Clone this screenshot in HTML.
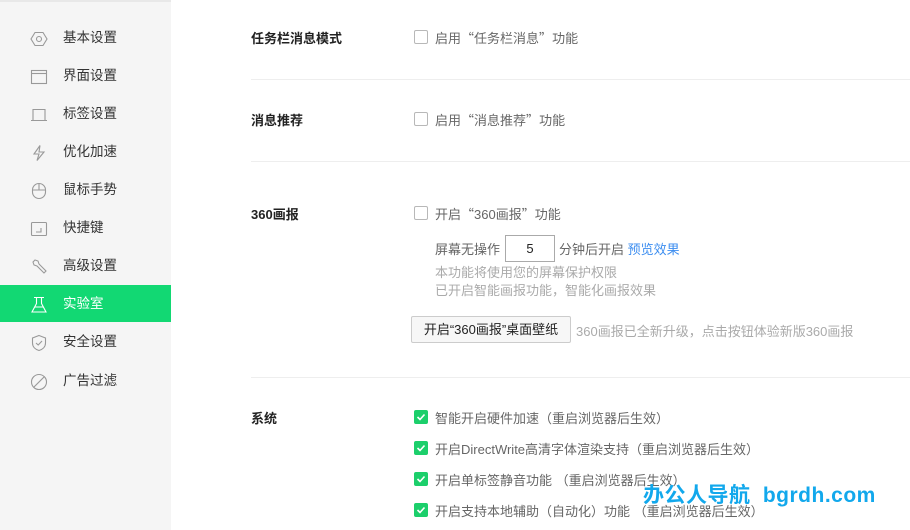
<!DOCTYPE html>
<html><head><meta charset="utf-8"><style>
*{margin:0;padding:0;box-sizing:border-box}
body{width:910px;height:530px;overflow:hidden;background:#fff;font-family:"Liberation Sans","Noto Sans CJK SC",sans-serif;font-size:13px;color:#333;position:relative}
.side{position:absolute;left:0;top:0;width:171px;height:530px;background:#f5f5f5;border-top:2px solid #e8e8e8}
.it{position:absolute;left:0;width:171px;height:38px;line-height:38px;padding-left:63px;font-size:13.5px;color:#333}
.it svg{position:absolute;left:30px;top:11px}
.act{background:#12d873;color:#fff}
.a{position:absolute;white-space:nowrap}
.lbl{font-weight:bold;color:#222;font-size:13px}
.hr{position:absolute;left:251px;right:0;height:1px;background:#eeeeee}
.cb{position:absolute;width:14px;height:14px;border:1px solid #b8b8b8;border-radius:2px;background:#fff}
.gray{color:#666}
.lg{color:#aaa}
.q{font-family:"Noto Sans CJK SC",sans-serif}
</style></head><body>
<div class="side">
<div class="it" style="top:17px"><svg width="18" height="18" viewBox="0 0 18 18" fill="none" stroke="#999" stroke-width="1.1"><path d="M5 2.5h8l4 6.5-4 6.5H5L1 9z"/><circle cx="9" cy="9" r="2.5"/></svg>基本设置</div>
<div class="it" style="top:55px"><svg width="18" height="18" viewBox="0 0 18 18" fill="none" stroke="#999" stroke-width="1.1"><rect x="1.5" y="2.5" width="15" height="13"/><path d="M1.5 5.5h15"/></svg>界面设置</div>
<div class="it" style="top:93px"><svg width="18" height="18" viewBox="0 0 18 18" fill="none" stroke="#999" stroke-width="1.1"><path d="M3 14V3.5h12V14M1 14.5h16"/></svg>标签设置</div>
<div class="it" style="top:131px"><svg width="18" height="18" viewBox="0 0 18 18" fill="none" stroke="#999" stroke-width="1.1"><path d="M10 1.5L4 10h5l-2 6.5L14 8H9z"/></svg>优化加速</div>
<div class="it" style="top:169px"><svg width="18" height="18" viewBox="0 0 18 18" fill="none" stroke="#999" stroke-width="1.1"><rect x="2.5" y="1.5" width="13" height="15" rx="6.5"/><path d="M2.5 8h13M9 1.5V8"/></svg>鼠标手势</div>
<div class="it" style="top:207px"><svg width="18" height="18" viewBox="0 0 18 18" fill="none" stroke="#999" stroke-width="1.1"><rect x="1.5" y="2.5" width="15" height="13" rx="1"/><path d="M11 8v4H6"/></svg>快捷键</div>
<div class="it" style="top:245px"><svg width="18" height="18" viewBox="0 0 18 18" fill="none" stroke="#999" stroke-width="1.1"><path d="M3 4l2-2 3 1 1 3 7 7-2 2-7-7-3-1z"/></svg>高级设置</div>
<div class="it act" style="top:283px;height:37px;line-height:37px"><svg width="18" height="18" viewBox="0 0 18 18" fill="none" stroke="#fff" stroke-width="1.1"><path d="M4 1.5h10M6.5 1.5v6L2 16h14l-4.5-8.5v-6M5 11h8"/></svg>实验室</div>
<div class="it" style="top:321px"><svg width="18" height="18" viewBox="0 0 18 18" fill="none" stroke="#999" stroke-width="1.1"><path d="M9 1.5l6.5 2.5v5c0 4-3 6.5-6.5 7.5C5.5 15.5 2.5 13 2.5 9V4z"/><path d="M6 9l2.2 2L12 7"/></svg>安全设置</div>
<div class="it" style="top:360px"><svg width="18" height="18" viewBox="0 0 18 18" fill="none" stroke="#999" stroke-width="1.1"><circle cx="9" cy="9" r="7.5"/><path d="M4 14L14 4"/></svg>广告过滤</div>
</div>

<div class="a lbl" style="left:251px;top:28px">任务栏消息模式</div>
<div class="cb" style="left:414px;top:30px"></div>
<div class="a gray" style="left:435px;top:28px">启用<span class="q">“</span>任务栏消息<span class="q">”</span>功能</div>
<div class="hr" style="top:79px"></div>

<div class="a lbl" style="left:251px;top:110px">消息推荐</div>
<div class="cb" style="left:414px;top:112px"></div>
<div class="a gray" style="left:435px;top:110px">启用<span class="q">“</span>消息推荐<span class="q">”</span>功能</div>
<div class="hr" style="top:161px"></div>

<div class="a lbl" style="left:251px;top:204px">360画报</div>
<div class="cb" style="left:414px;top:206px"></div>
<div class="a gray" style="left:435px;top:204px">开启<span class="q">“</span>360画报<span class="q">”</span>功能</div>
<div class="a gray" style="left:435px;top:239px">屏幕无操作</div>
<div class="a" style="left:505px;top:235px;width:50px;height:27px;border:1px solid #aaa;text-align:center;line-height:25px;color:#222">5</div>
<div class="a gray" style="left:559px;top:239px">分钟后开启 <span style="color:#3d8ef0">预览效果</span></div>
<div class="a lg" style="left:435px;top:262px">本功能将使用您的屏幕保护权限</div>
<div class="a lg" style="left:435px;top:280px">已开启智能画报功能，智能化画报效果</div>
<div class="a" style="left:411px;top:316px;width:160px;height:27px;border:1px solid #ccc;border-radius:2px;background:#f7f7f7;text-align:center;line-height:25px;color:#222">开启“360画报”桌面壁纸</div>
<div class="a lg" style="left:576px;top:321px">360画报已全新升级，点击按钮体验新版360画报</div>
<div class="hr" style="top:377px"></div>

<div class="a lbl" style="left:251px;top:408px">系统</div>
<svg class="a" style="left:414px;top:410px" width="14" height="14"><rect width="14" height="14" rx="2" fill="#1ccf6b"/><path d="M3.5 7l2.5 2.5 4.5-5" stroke="#fff" stroke-width="1.6" fill="none"/></svg>
<div class="a gray" style="left:435px;top:408px">智能开启硬件加速（重启浏览器后生效）</div>
<svg class="a" style="left:414px;top:441px" width="14" height="14"><rect width="14" height="14" rx="2" fill="#1ccf6b"/><path d="M3.5 7l2.5 2.5 4.5-5" stroke="#fff" stroke-width="1.6" fill="none"/></svg>
<div class="a gray" style="left:435px;top:439px">开启DirectWrite高清字体渲染支持（重启浏览器后生效）</div>
<svg class="a" style="left:414px;top:472px" width="14" height="14"><rect width="14" height="14" rx="2" fill="#1ccf6b"/><path d="M3.5 7l2.5 2.5 4.5-5" stroke="#fff" stroke-width="1.6" fill="none"/></svg>
<div class="a gray" style="left:435px;top:470px">开启单标签静音功能 （重启浏览器后生效）</div>
<svg class="a" style="left:414px;top:503px" width="14" height="14"><rect width="14" height="14" rx="2" fill="#1ccf6b"/><path d="M3.5 7l2.5 2.5 4.5-5" stroke="#fff" stroke-width="1.6" fill="none"/></svg>
<div class="a gray" style="left:435px;top:501px">开启支持本地辅助（自动化）功能 （重启浏览器后生效）</div>

<div class="a" style="left:643px;top:479px;font-size:21px;font-weight:bold;color:#12a8ec;letter-spacing:0.5px">办公人导航 <span style="margin-left:6px">bgrdh.com</span></div>
</body></html>
